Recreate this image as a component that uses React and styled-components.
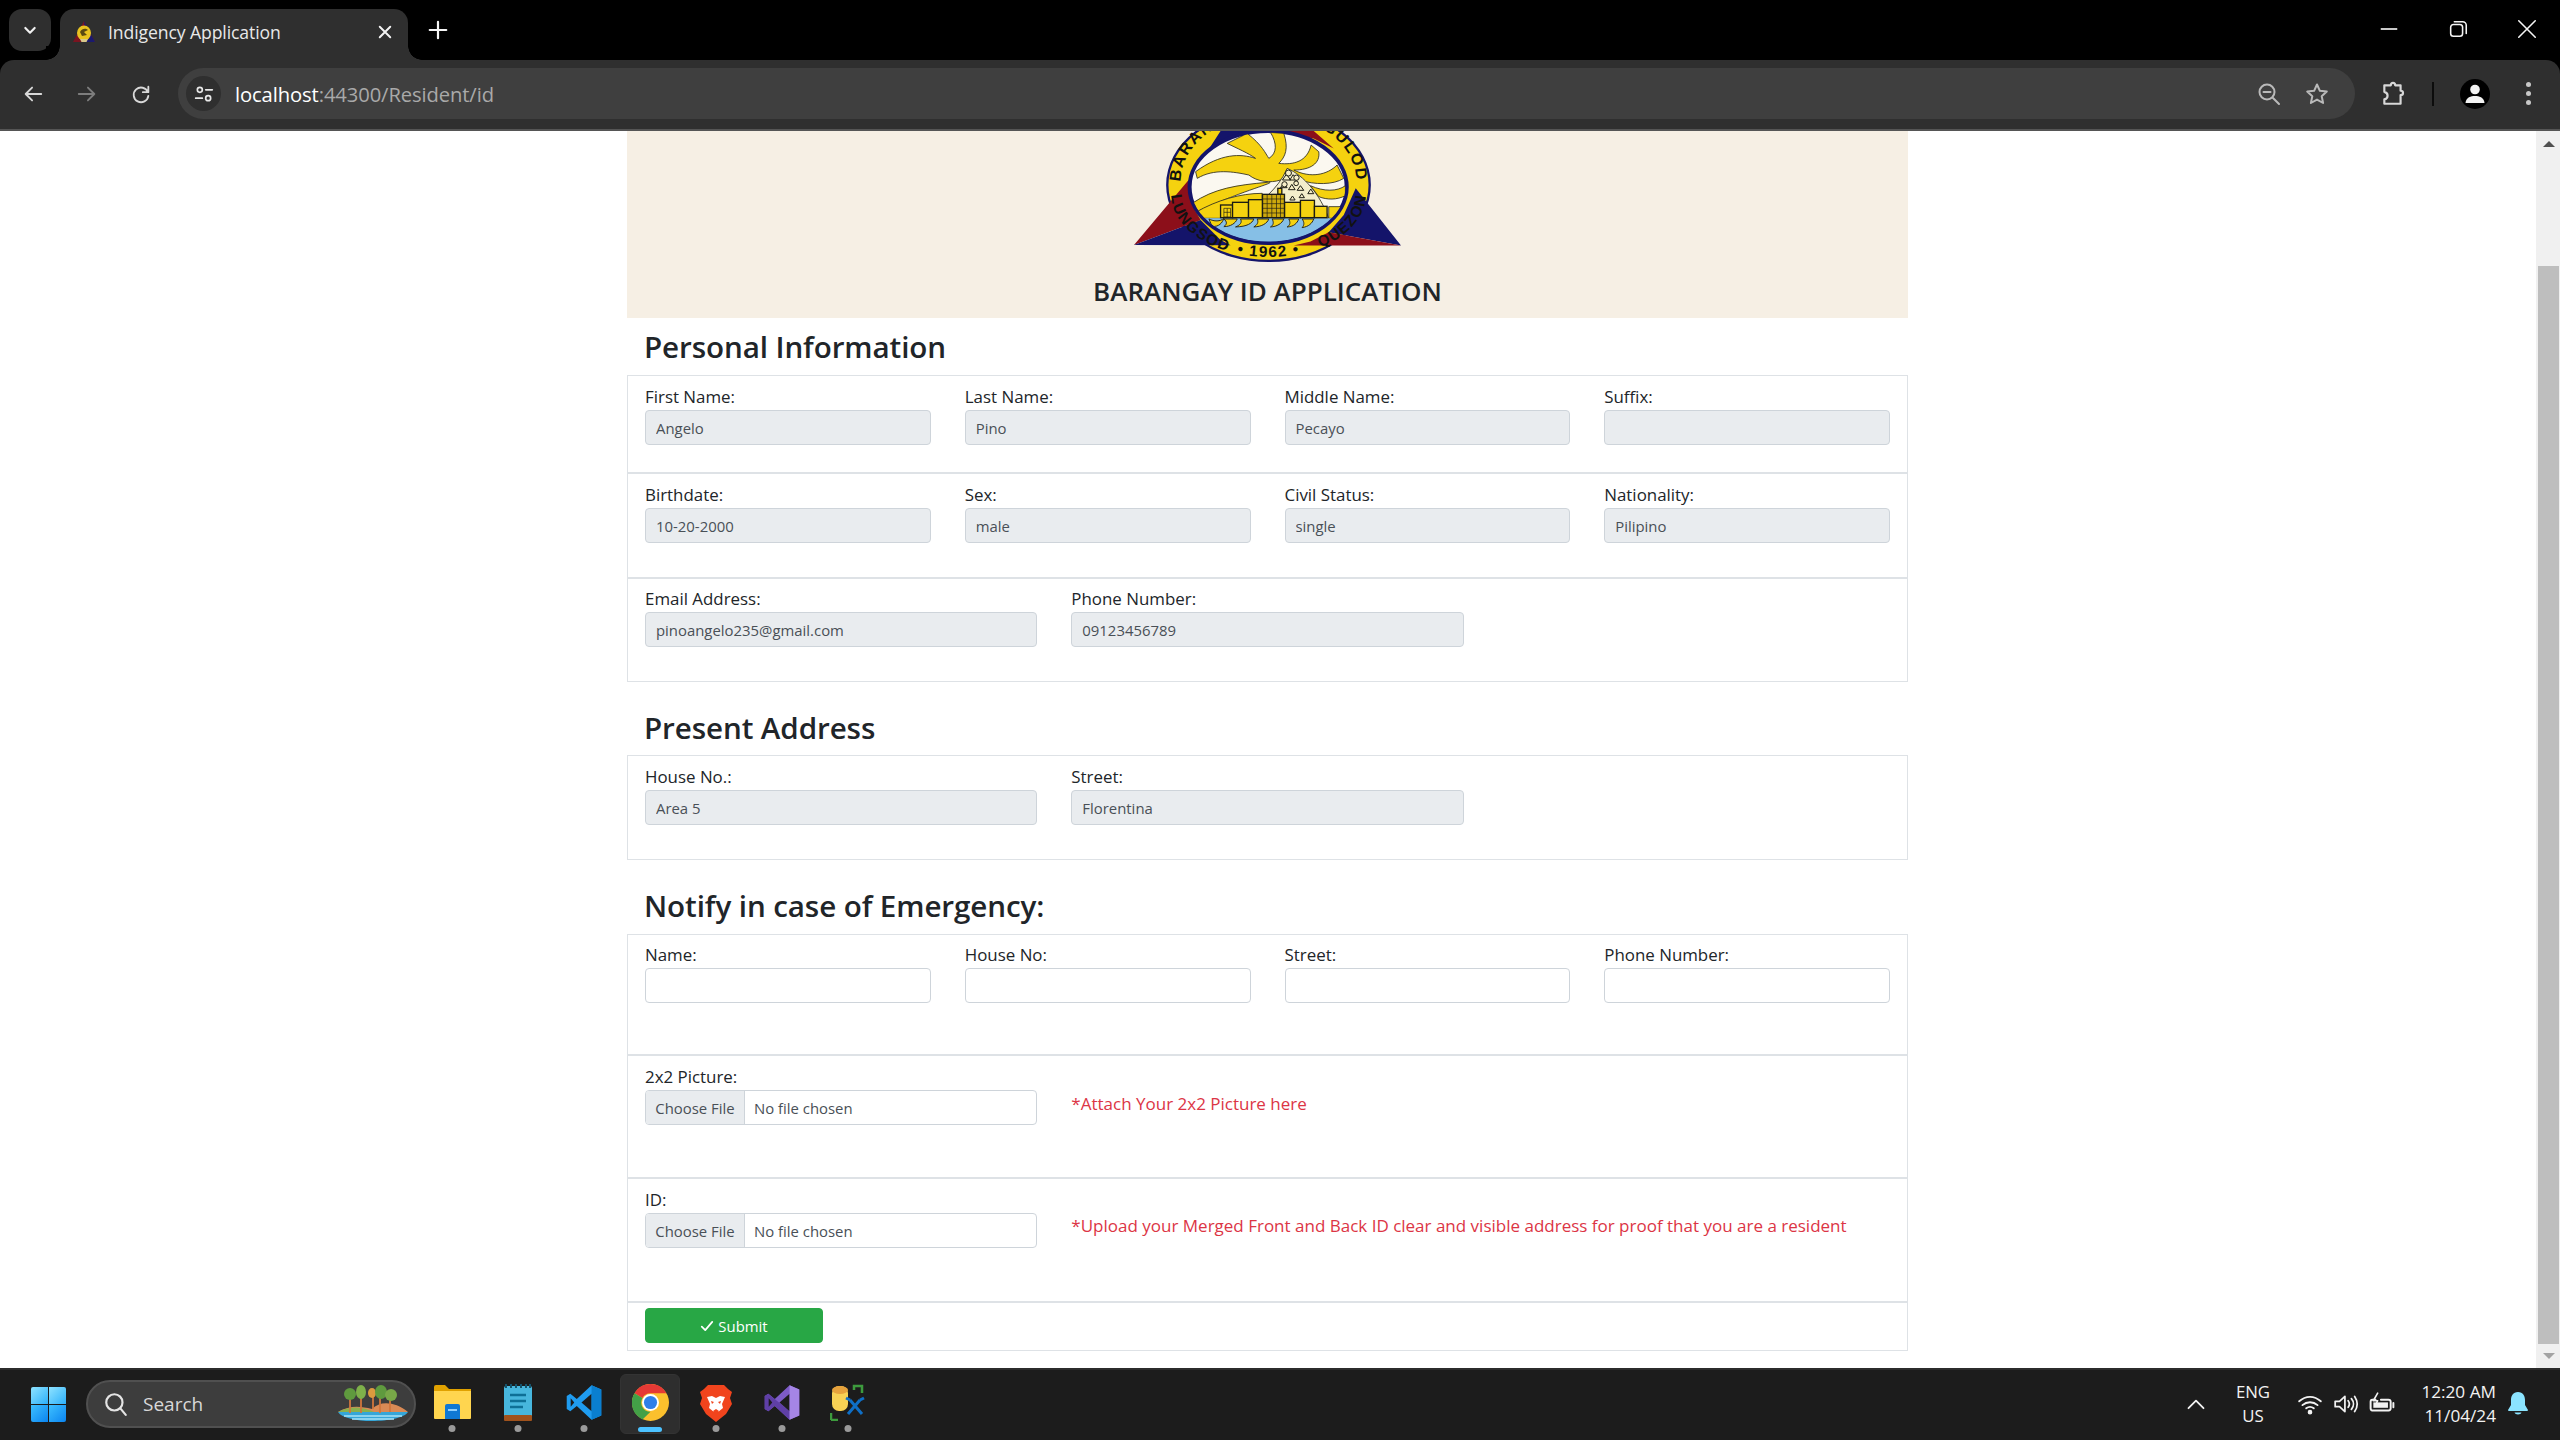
import React from "react";
import styled, { createGlobalStyle } from "styled-components";

const FONT = `"Open Sans", "Noto Sans", "Liberation Sans", sans-serif`;
const LOGO_FONT = `'Liberation Sans', sans-serif`;

const Global = createGlobalStyle`
  html, body { margin: 0; padding: 0; width: 2560px; height: 1440px; overflow: hidden; background: #fff; }
  * { box-sizing: border-box; }
  body { font-family: ${FONT}; color: #212529; }
`;

const Shell = styled.div`
  width: 2560px; height: 1440px; display: flex; flex-direction: column; overflow: hidden;
`;

/* ---------- browser chrome ---------- */
const TabStrip = styled.div`
  height: 60px; background: #000; display: flex; align-items: flex-start; padding: 9px 0 0 9px; flex: none;
`;
const TabMenu = styled.div`
  width: 42px; height: 42px; border-radius: 13px; background: #2f2f2f;
  display: flex; align-items: center; justify-content: center; flex: none;
`;
const Tab = styled.div`
  position: relative; width: 348px; height: 51px; margin-left: 9px; background: #2f2f2f;
  border-radius: 14px 14px 0 0; display: flex; align-items: center; padding: 0 14px 6px 13px; flex: none;
  &::before, &::after {
    content: ""; position: absolute; bottom: 0; width: 14px; height: 14px;
  }
  &::before { left: -14px; background: radial-gradient(circle at 0 0, #000 13.5px, #2f2f2f 14px); }
  &::after { right: -14px; background: radial-gradient(circle at 100% 0, #000 13.5px, #2f2f2f 14px); }
`;
const TabTitle = styled.span`
  margin-left: 13px; font-size: 17.6px; color: #e8e8e8; flex: 1; white-space: nowrap; letter-spacing: -0.1px;
`;
const NewTab = styled.div`
  margin: 7px 0 0 19px; width: 22px; height: 28px; display: flex; align-items: center; justify-content: center;
`;
const WindowControls = styled.div`
  margin-left: auto; margin-top: 9px; display: flex; align-items: center; gap: 47px; padding-right: 22px;
`;
const Toolbar = styled.div`
  height: 71px; flex: none; background: #000; 
`;
const ToolbarInner = styled.div`
  height: 71px; background: #2f2f2f; border-radius: 14px 14px 0 0; border-bottom: 2px solid #555;
  display: flex; align-items: center; padding: 0 0 2px 22px;
`;
const NavIcon = styled.div`
  width: 22px; height: 22px; margin-right: 32px; display: flex; align-items: center; justify-content: center; flex: none;
`;
const Omnibox = styled.div`
  width: 2177px; height: 51px; margin-left: -6px; border-radius: 26px; background: #3f3f3f;
  display: flex; align-items: center; padding: 0 26px 0 8px; flex: none;
`;
const SiteInfo = styled.div`
  width: 35px; height: 35px; border-radius: 50%; background: #2f2f2f;
  display: flex; align-items: center; justify-content: center; flex: none;
`;
const Url = styled.div`
  margin-left: 14px; font-size: 20.2px; color: #fff; flex: 1; letter-spacing: -0.1px;
`;
const UrlMuted = styled.span`
  color: #a9a9a9;
`;
const OmniIcons = styled.div`
  display: flex; align-items: center; gap: 24px;
`;
const ToolIcons = styled.div`
  display: flex; align-items: center; margin-left: 25px;
`;
const Divider = styled.div`
  width: 2px; height: 24px; background: #0c0c0c; margin: 0 26px 0 26px;
`;
const Avatar = styled.div`
  width: 30px; height: 30px; border-radius: 50%; background: #000; display: flex; align-items: center; justify-content: center;
`;
const Kebab = styled.div`
  margin-left: 36px; width: 5px; display: flex; flex-direction: column; gap: 4px;
  span { width: 5px; height: 5px; border-radius: 50%; background: #c8c8c8; display: block; }
`;

/* ---------- viewport ---------- */
const Viewport = styled.div`
  flex: 1; display: flex; min-height: 0; background: #fff;
`;
const Page = styled.main`
  flex: 1; min-width: 0;
`;
const Container = styled.div`
  width: 1281px; margin: 0 0 0 627px;
`;
const Banner = styled.header`
  height: 187px; background: #f6efe4; display: flex; flex-direction: column; align-items: center;
`;
const BannerTitle = styled.h4`
  margin: 8px 0 0; font-size: 26px; line-height: 36px; font-weight: 600; color: #212529; white-space: nowrap;
`;
const SectionTitle = styled.h3`
  margin: ${(p) => p.$top}px 0 ${(p) => p.$bottom}px; padding-left: 17px; font-size: 29.6px; line-height: 38px;
  font-weight: 600; color: #212529; white-space: nowrap; letter-spacing: -0.1px;
`;
const Card = styled.section`
  border: 1px solid #dee2e6;
`;
const Row = styled.div`
  display: grid; grid-template-columns: repeat(${(p) => p.$cols}, ${(p) => 100 / p.$cols}%);
  padding-top: ${(p) => p.$top}px; padding-bottom: ${(p) => p.$bottom}px;
  border-bottom: ${(p) => (p.$last ? "none" : "2px solid #dee2e6")};
`;
const Field = styled.div`
  padding: 0 17px;
  min-width: 0;
`;
const HintColumn = styled(Field)`
  grid-column: span 2;
`;
const Label = styled.label`
  display: block; height: 26px; line-height: 26px; font-size: 16.9px; color: #212529; white-space: nowrap;
`;
const Input = styled.input`
  display: block; width: 100%; height: 35px; padding: 0 10px; font-family: ${FONT}; font-size: 14.9px; color: #495057;
  background: ${(p) => (p.readOnly ? "#e9ecef" : "#fff")}; border: 1px solid #ced4da; border-radius: 4px; outline: none;
`;
const FileBox = styled.div`
  display: flex; height: 35px; border: 1px solid #ced4da; border-radius: 4px; overflow: hidden; font-size: 14.9px; color: #495057; background: #fff;
`;
const FileButton = styled.span`
  width: 99px; flex: none; background: #e9ecef; border-right: 1px solid #ced4da;
  display: flex; align-items: center; justify-content: center; white-space: nowrap;
`;
const FileName = styled.span`
  margin-left: 9px; display: flex; align-items: center; white-space: nowrap;
`;
const Hint = styled.div`
  margin-top: ${(p) => p.$top}px; font-size: 17px; line-height: 26px; color: #dc3545; white-space: nowrap;
`;
const ButtonRow = styled.div`
  padding: 5px 17px 7px;
`;
const SubmitButton = styled.button`
  display: flex; align-items: center; justify-content: center; gap: 4px; width: 178px; height: 35px;
  background: #28a745; border: 1px solid #28a745; border-radius: 4px; color: #fff; font-family: ${FONT}; font-size: 14.9px; padding: 0;
`;

const Scrollbar = styled.div`
  width: 24px; flex: none; background: #f0f0f0; display: flex; flex-direction: column; align-items: center; padding-left: 1px;
`;
const ScrollArrowUp = styled.div`
  height: 16px; display: flex; align-items: flex-end; justify-content: center; flex: none;
`;
const ScrollArrowDown = styled.div`
  flex: 1; display: flex; align-items: center; justify-content: center;
`;
const Triangle = styled.div`
  width: 0; height: 0; border-left: 6px solid transparent; border-right: 6px solid transparent;
  ${(p) => (p.$down ? "border-top: 6px solid #a3a3a3;" : "border-bottom: 6px solid #505050;")}
`;
const Thumb = styled.div`
  width: 21px; height: 1078px; margin-top: 119px; background: #bebebe; flex: none;
`;

/* ---------- taskbar ---------- */
const Taskbar = styled.footer`
  height: 72px; flex: none; background: #1c1c1c; border-top: 2px solid #2c2c2c; display: flex; align-items: center; padding-left: 31px; position: relative;
`;
const StartIcon = styled.div`
  width: 35px; height: 35px; flex: none; margin-top: -2px;
`;
const SearchPill = styled.div`
  width: 330px; height: 48px; margin-left: 20px; margin-top: -2px; border-radius: 24px; background: #3d3d3d; border: 2px solid #505050;
  display: flex; align-items: center; padding: 0 6px 0 15px; flex: none;
`;
const SearchText = styled.span`
  margin-left: 14px; font-size: 19px; color: #d8d8d8; flex: 1;
`;
const Apps = styled.div`
  display: flex; margin-left: 3px; flex: none; 
`;
const AppSlot = styled.div`
  position: relative; width: 66px; height: 60px; display: flex; align-items: center; justify-content: center; margin-top: -2px;
  ${(p) => p.$active && `&::before { content: ""; position: absolute; left: 3px; right: 3px; top: 0; bottom: 0; background: #2e2e2e; border-radius: 6px; border: 1px solid #333; }`}
  svg { position: relative; margin-top: -3px; }
`;
const AppDot = styled.span`
  position: absolute; bottom: 2px; left: 50%; transform: translateX(-50%);
  width: ${(p) => (p.$active ? 24 : 7)}px; height: ${(p) => (p.$active ? 5 : 7)}px; border-radius: 4px;
  background: ${(p) => (p.$active ? "#4cc2ff" : "#9a9a9a")};
`;
const Tray = styled.div`
  margin-left: auto; display: flex; align-items: center; color: #f2f2f2; padding-right: 30px; margin-top: -2px;
`;
const TrayIcon = styled.div`
  display: flex; align-items: center; justify-content: center; width: ${(p) => p.$w}px; margin-left: ${(p) => p.$ml}px;
`;
const Lang = styled.div`
  margin-left: 25px; width: 44px; text-align: center; font-size: 16.8px; line-height: 24px;
`;
const Clock = styled.div`
  margin-left: 7px; width: 94px; text-align: right; font-size: 17.2px; line-height: 24px; white-space: nowrap;
`;
const Bell = styled.div`
  margin-left: 10px; width: 24px; display: flex; justify-content: center;
`;

/* ---------- drawings ---------- */
const Icon = ({ size = 22, vb = "0 0 24 24", stroke = "#c7c7c7", sw = 2, children }) => (
  <svg width={size} height={size} viewBox={vb} fill="none" stroke={stroke} strokeWidth={sw} strokeLinecap="round" strokeLinejoin="round">
    {children}
  </svg>
);

const Favicon = () => (
  <svg width="22" height="22" viewBox="0 0 22 22">
    <path d="M11 0 L22 21 L0 21 Z" fill="#7a1420" />
    <path d="M11 0 L22 21 L13 21 Z" fill="#1a1a6e" />
    <ellipse cx="11" cy="12" rx="7" ry="7.5" fill="#e9c320" />
    <path d="M7 11 C9 7 13 7 15 9 L11 11 L14 14 L9 15Z" fill="#5a4a12" />
    <path d="M7 18 H15 L13.5 21 H8.5Z" fill="#d8c88a" />
  </svg>
);

const Logo = () => (
  <svg width="267" height="134" viewBox="160 18 802 402">
    <defs>
      <clipPath id="inner"><ellipse cx="563" cy="186" rx="232" ry="164" /></clipPath>
      <path id="topArc" d="M 300 170 A 262 200 0 0 1 828 170" />
      <path id="botArc" d="M 272 210 A 292 186 0 0 0 856 210" />
    </defs>
    <ellipse cx="564" cy="180" rx="304" ry="228" fill="#f5d20f" stroke="#14146a" strokeWidth="7" />
    <text fontFamily={LOGO_FONT} fontWeight="700" fontSize="48" fill="#111" letterSpacing="5"><textPath href="#topArc" startOffset="0">BARANGAY</textPath></text>
    <text fontFamily={LOGO_FONT} fontWeight="700" fontSize="48" fill="#111" textAnchor="end" letterSpacing="5"><textPath href="#topArc" startOffset="100%">GULOD</textPath></text>
    <path d="M160 360 L324 165 L340 250 L360 285Z" fill="#8c0f1a" />
    <path d="M160 360 L360 285 L420 345 L450 361Z" fill="#14146a" />
    <path d="M962 362 L826 190 L790 270 L745 322Z" fill="#14146a" />
    <path d="M962 362 L745 322 L690 350 L640 362Z" fill="#8c0f1a" />
    <path d="M590 18 L700 18 L760 70 L700 40Z" fill="#8c0f1a" />
    <path d="M420 18 L590 18 L470 45 L370 95Z" fill="#14146a" />
    <text fontFamily={LOGO_FONT} fontWeight="700" fontSize="46" fill="#111" letterSpacing="4"><textPath href="#botArc" startOffset="0">LUNGSOD</textPath></text>
    <text fontFamily={LOGO_FONT} fontWeight="700" fontSize="46" fill="#111" letterSpacing="4" textAnchor="middle"><textPath href="#botArc" startOffset="50%">• 1962 •</textPath></text>
    <text fontFamily={LOGO_FONT} fontWeight="700" fontSize="46" fill="#111" letterSpacing="4" textAnchor="end"><textPath href="#botArc" startOffset="100%">QUEZON</textPath></text>
    <ellipse cx="563" cy="186" rx="236" ry="168" fill="#fbf8f0" stroke="#14146a" strokeWidth="12" />
    <g clipPath="url(#inner)" stroke="#2a2a20" strokeWidth="2.5" fill="#f5d20f">
      <path d="M525 100 C480 85 420 85 345 140 L350 160 C400 130 460 140 505 150 C530 170 570 175 600 165 L660 165 C700 180 760 180 790 160 L770 120 C740 150 690 160 640 135 C690 135 720 115 715 80 L692 60 C680 110 640 120 595 115 C615 95 625 70 610 25 L570 22 C590 55 590 85 565 100 C555 85 545 60 500 25 L440 55 C470 70 505 85 525 100Z" />
      <path d="M335 235 C400 190 470 180 560 172 C600 170 500 190 345 262 L335 262Z" />
      <path d="M345 262 C410 225 480 205 545 205 L545 280 L360 280Z" />
      <path d="M620 130 C670 150 720 210 745 280 L500 280 C540 220 590 200 620 130Z" fill="#f4eecb" />
      <path d="M690 182 C730 200 770 200 795 182 L795 212 C770 225 740 225 715 215Z" />
      <path d="M745 280 L745 245 L785 245 L770 280Z" />
      <path d="M320 280 H800 V360 H320Z" fill="#86bfe6" strokeWidth="0" />
    </g>
    <g clipPath="url(#inner)" fill="#f5d20f" stroke="#2a2a20" strokeWidth="3">
      <path d="M385 282 C400 290 420 290 430 280 C425 295 415 305 395 305Z" />
      <path d="M430 282 H470 C465 295 450 305 430 305 C440 298 440 290 430 282Z" />
      <path d="M480 282 H520 C515 295 500 305 465 306 C480 300 485 292 480 282Z" />
      <path d="M530 282 H565 C560 295 545 305 520 306 C530 300 535 292 530 282Z" />
      <path d="M575 282 H610 C605 295 590 305 570 306 C580 300 580 292 575 282Z" />
      <path d="M625 282 H655 C650 295 640 305 620 306 C630 300 630 292 625 282Z" />
      <path d="M665 282 H700 C695 295 685 305 665 308 C672 300 672 292 665 282Z" />
    </g>
    <g fill="#f5d20f" stroke="#1c1c14" strokeWidth="4">
      <rect x="420" y="240" width="36" height="38" />
      <rect x="456" y="232" width="48" height="46" />
      <rect x="504" y="224" width="42" height="54" />
      <rect x="612" y="232" width="48" height="46" />
      <rect x="660" y="226" width="42" height="52" />
      <rect x="702" y="244" width="38" height="34" />
      <rect x="592" y="190" width="12" height="18" />
      <rect x="546" y="208" width="66" height="70" fill="#cda80d" />
    </g>
    <g stroke="#1c1c14" strokeWidth="2">
      <path d="M560 208 V278 M574 208 V278 M588 208 V278 M600 208 V278 M546 222 H612 M546 236 H612 M546 250 H612 M546 264 H612" />
      <path d="M430 250 H450 V276 H430Z M440 250 V276 M430 262 H450" fill="none" />
    </g>
    <g fill="#f7efc8" stroke="#1c1c14" strokeWidth="3">
      <path d="M606 165 l12 -18 l12 18z M628 165 l10 -16 l12 16z" />
      <path d="M600 188 l10 -14 l10 14z M624 194 l10 -16 l10 16z M650 196 l10 -14 l10 14z" />
      <path d="M682 206 l9 -14 l9 14z M628 225 l8 -12 l8 12z M656 218 l8 -12 l8 12z" />
      <circle cx="624" cy="144" r="9" /><circle cx="648" cy="158" r="8" /><circle cx="612" cy="178" r="8" /><circle cx="647" cy="175" r="7" />
    </g>
  </svg>
);

const WinLogo = () => (
  <svg width="35" height="35" viewBox="0 0 35 35">
    <defs>
      <linearGradient id="winA" x1="0" y1="0" x2="1" y2="1"><stop offset="0" stopColor="#8fe3ff" /><stop offset="1" stopColor="#2cb0fb" /></linearGradient>
      <linearGradient id="winB" x1="0" y1="0" x2="1" y2="1"><stop offset="0" stopColor="#3ec0ff" /><stop offset="1" stopColor="#0a84f0" /></linearGradient>
    </defs>
    <path d="M0 2 a2 2 0 0 1 2 -2 H17 V17 H0Z" fill="url(#winA)" />
    <path d="M18 0 H33 a2 2 0 0 1 2 2 V17 H18Z" fill="url(#winA)" />
    <path d="M0 18 H17 V35 H2 a2 2 0 0 1 -2 -2Z" fill="url(#winB)" />
    <path d="M18 18 H35 V33 a2 2 0 0 1 -2 2 H18Z" fill="url(#winB)" />
  </svg>
);

const Island = () => (
  <svg width="70" height="38" viewBox="0 0 70 38">
    <path d="M0 27 C12 20 22 21 34 24 C42 16 56 16 70 27 Z" fill="#d98a55" />
    <path d="M0 27 C10 21 24 21 36 27Z" fill="#8ab04e" />
    <path d="M0 27 H70 C64 38 8 40 0 27Z" fill="#35a6d8" />
    <path d="M6 31 H64 M14 34 H56" stroke="#a6e2f5" strokeWidth="1.5" />
    <path d="M12 10 V28 M23 8 V28 M35 10 V24 M42 8 V28 M52 10 V27" stroke="#d0763c" strokeWidth="1.8" />
    <ellipse cx="12" cy="9" rx="6" ry="6" fill="#5f9a3e" />
    <ellipse cx="23" cy="7" rx="5" ry="7" fill="#7eb04a" />
    <ellipse cx="34" cy="8" rx="4" ry="5" fill="#dc9a3e" />
    <ellipse cx="43" cy="7" rx="6" ry="7" fill="#5f9a3e" />
    <ellipse cx="53" cy="10" rx="6" ry="6" fill="#78a848" />
  </svg>
);

const FolderApp = () => (
  <svg width="37" height="37" viewBox="0 0 37 37">
    <path d="M0 3 a2 2 0 0 1 2 -2 H11 L15 5 H37 V33 H0Z" fill="#e0a100" />
    <path d="M0 7 H37 V34 a1 1 0 0 1 -1 1 H1 a1 1 0 0 1 -1 -1Z" fill="#ffd54f" />
    <path d="M11 22 a2 2 0 0 1 2 -2 H24 a2 2 0 0 1 2 2 V35 H11Z" fill="#0f78d4" />
    <rect x="14" y="25" width="9" height="2" fill="#8fd0ff" />
  </svg>
);
const NotepadApp = () => (
  <svg width="30" height="37" viewBox="0 0 30 37">
    <rect x="1" y="2" width="28" height="33" rx="2" fill="#47b6dd" />
    <rect x="1" y="31" width="28" height="6" rx="1" fill="#a0521c" />
    <path d="M3 0 v4 M8 0 v4 M13 0 v4 M18 0 v4 M23 0 v4 M27 0 v4" stroke="#14536b" strokeWidth="2" />
    <path d="M7 11 H23 M7 17 H23 M7 23 H20" stroke="#0e6f96" strokeWidth="2.5" />
  </svg>
);
const VSCodeApp = () => (
  <svg width="36" height="37" viewBox="0 0 100 100">
    <path d="M71 2 L98 14 V86 L71 98 L30 60 L12 74 L2 68 V32 L12 26 L30 40Z" fill="#1f9cf0" />
    <path d="M71 26 L43 50 L71 74Z" fill="#1c1c1c" />
    <path d="M13 38 L23 50 L13 62Z" fill="#1c1c1c" />
    <path d="M71 2 L98 14 V86 L71 98Z" fill="#0a7fd0" />
  </svg>
);
const ChromeApp = () => (
  <svg width="37" height="37" viewBox="0 0 48 48">
    <circle cx="24" cy="24" r="24" fill="#fbc02d" />
    <path d="M24 0 A24 24 0 0 1 44.8 12 H24 A12 12 0 0 0 13.6 18 L3.2 12 A24 24 0 0 1 24 0Z" fill="#e53935" />
    <path d="M3.2 12 L13.6 18 A12 12 0 0 0 24 36 L13.6 46 A24 24 0 0 1 3.2 12Z" fill="#43a047" />
    <circle cx="24" cy="24" r="11" fill="#fff" />
    <circle cx="24" cy="24" r="8.5" fill="#2f7fe8" />
  </svg>
);
const BraveApp = () => (
  <svg width="34" height="38" viewBox="0 0 34 38">
    <path d="M9 1 H25 L29 5 L33 8 L31 14 L33 20 L27 30 L17 38 L7 30 L1 20 L3 14 L1 8 L5 5Z" fill="#f1441d" />
    <path d="M8 13 L13 12 L17 14 L21 12 L26 13 L23 20 L24 24 L19 28 H15 L10 24 L11 20Z" fill="#fff" />
    <path d="M14 27 L17 25 L20 27 L17 31Z M12 17 L15 18 L13 20Z M22 17 L19 18 L21 20Z" fill="#f1441d" />
  </svg>
);
const VSApp = () => (
  <svg width="36" height="37" viewBox="0 0 100 100">
    <path d="M71 2 L98 14 V86 L71 98 L30 60 L12 74 L2 68 V32 L12 26 L30 40Z" fill="#7d5bc7" />
    <path d="M2 32 L12 26 L71 74 V98 L30 60 L12 74 L2 68Z" fill="#5f3fa6" />
    <path d="M71 26 L43 50 L71 74Z" fill="#1c1c1c" />
    <path d="M71 2 L98 14 V86 L71 98Z" fill="#a585e6" />
    <path d="M13 38 L23 50 L13 62Z" fill="#1c1c1c" />
  </svg>
);
const ToolApp = () => (
  <svg width="36" height="37" viewBox="0 0 36 37">
    <rect x="2" y="2" width="16" height="25" rx="7" fill="#f7d154" />
    <ellipse cx="10" cy="6" rx="8" ry="4" fill="#e6a23c" />
    <path d="M24 6 V2 H32 V9 M1 36 H8 M1 36 V29" stroke="#3d9b3d" strokeWidth="2.5" fill="none" />
    <path d="M18 30 L30 16 M32 30 L20 16 M16 14 L20 16 M34 14 L30 16" stroke="#0f6fc6" strokeWidth="3" />
  </svg>
);

const APPS = [
  [FolderApp, false], [NotepadApp, false], [VSCodeApp, false], [ChromeApp, true], [BraveApp, false], [VSApp, false], [ToolApp, false],
];

const FileField = ({ label, hint, bottom, hintTop }) => (
  <Row $cols={3} $top={8} $bottom={bottom}>
    <Field>
      <Label>{label}</Label>
      <FileBox>
        <FileButton>Choose File</FileButton>
        <FileName>No file chosen</FileName>
      </FileBox>
    </Field>
    <HintColumn>
      <Hint $top={hintTop}>{hint}</Hint>
    </HintColumn>
  </Row>
);

const Fields = ({ items, cols, top, bottom, last }) => (
  <Row $cols={cols} $top={top} $bottom={bottom} $last={last}>
    {items.map(([label, value, ro]) => (
      <Field key={label}>
        <Label>{label}</Label>
        <Input readOnly={ro} defaultValue={value} />
      </Field>
    ))}
  </Row>
);

export default function App() {
  return (
    <Shell>
      <Global />
      <TabStrip>
        <TabMenu>
          <Icon size={16} stroke="#f0f0f0" sw={3.2}><path d="M5 9 L12 16 L19 9" /></Icon>
        </TabMenu>
        <Tab>
          <Favicon />
          <TabTitle>Indigency Application</TabTitle>
          <Icon size={18} stroke="#f2f2f2" sw={2.6}><path d="M5 5 L19 19 M19 5 L5 19" /></Icon>
        </Tab>
        <NewTab>
          <Icon size={22} stroke="#f5f5f5" sw={2.4}><path d="M12 3 V21 M3 12 H21" /></Icon>
        </NewTab>
        <WindowControls>
          <Icon size={22} stroke="#f5f5f5" sw={1.8}><path d="M3 12 H21" strokeLinecap="butt" /></Icon>
          <Icon size={22} stroke="#f5f5f5" sw={1.7}>
            <rect x="4" y="7" width="13" height="13" rx="3" />
            <path d="M8 4 H17 A4 4 0 0 1 21 8 V17" />
          </Icon>
          <Icon size={22} stroke="#f5f5f5" sw={1.7}><path d="M3 3 L21 21 M21 3 L3 21" /></Icon>
        </WindowControls>
      </TabStrip>
      <Toolbar>
        <ToolbarInner>
          <NavIcon><Icon size={24} stroke="#d8d8d8" sw={2}><path d="M21 12 H4 M11 5 L4 12 L11 19" /></Icon></NavIcon>
          <NavIcon><Icon size={24} stroke="#7d7d7d" sw={2}><path d="M3 12 H20 M13 5 L20 12 L13 19" /></Icon></NavIcon>
          <NavIcon><Icon size={24} stroke="#d8d8d8" sw={2}><path d="M19.5 10 A8 8 0 1 0 20 14 M20 4 V10 H14" /></Icon></NavIcon>
          <Omnibox>
            <SiteInfo>
              <Icon size={20} stroke="#e8e8e8" sw={2}>
                <circle cx="7" cy="7" r="3" /><path d="M14 7 H22 M2 17 H10" /><circle cx="17" cy="17" r="3" />
              </Icon>
            </SiteInfo>
            <Url>localhost<UrlMuted>:44300/Resident/id</UrlMuted></Url>
            <OmniIcons>
              <Icon size={24} stroke="#b9b9b9" sw={2}><circle cx="10" cy="10" r="7.5" /><path d="M6.5 10 H13.5 M16 16 L22 22" /></Icon>
              <Icon size={24} stroke="#b9b9b9" sw={2}><path d="M12 2.5 L14.9 8.8 L21.8 9.6 L16.7 14.2 L18.1 21 L12 17.6 L5.9 21 L7.3 14.2 L2.2 9.6 L9.1 8.8Z" /></Icon>
            </OmniIcons>
          </Omnibox>
          <ToolIcons>
            <Icon size={26} stroke="#d8d8d8" sw={2}>
              <path d="M4 4 H10 C10 1 14 1 14 4 H19 V9 C22 9 22 13 19 13 V21 H4 V17 C8 16 8 11 4 10Z" />
            </Icon>
            <Divider />
            <Avatar>
              <svg width="24" height="24" viewBox="0 0 24 24" fill="#f2f2f2"><circle cx="12" cy="7.5" r="4.8" /><path d="M2.5 21 C3 15 8 14 12 14 C16 14 21 15 21.5 21Z" /></svg>
            </Avatar>
            <Kebab><span /><span /><span /></Kebab>
          </ToolIcons>
        </ToolbarInner>
      </Toolbar>

      <Viewport>
        <Page>
          <Container>
            <Banner>
              <Logo />
              <BannerTitle>BARANGAY ID APPLICATION</BannerTitle>
            </Banner>

            <SectionTitle $top={10} $bottom={9}>Personal Information</SectionTitle>
            <Card>
              <Fields cols={4} top={8} bottom={27} items={[["First Name:", "Angelo", true], ["Last Name:", "Pino", true], ["Middle Name:", "Pecayo", true], ["Suffix:", "", true]]} />
              <Fields cols={4} top={8} bottom={34} items={[["Birthdate:", "10-20-2000", true], ["Sex:", "male", true], ["Civil Status:", "single", true], ["Nationality:", "Pilipino", true]]} />
              <Fields cols={3} top={7} bottom={34} last items={[["Email Address:", "pinoangelo235@gmail.com", true], ["Phone Number:", "09123456789", true]]} />
            </Card>

            <SectionTitle $top={27} $bottom={8}>Present Address</SectionTitle>
            <Card>
              <Fields cols={3} top={8} bottom={34} last items={[["House No.:", "Area 5", true], ["Street:", "Florentina", true]]} />
            </Card>

            <SectionTitle $top={27} $bottom={9}>Notify in case of Emergency:</SectionTitle>
            <Card>
              <Fields cols={4} top={7} bottom={51} items={[["Name:", "", false], ["House No:", "", false], ["Street:", "", false], ["Phone Number:", "", false]]} />
              <FileField label="2x2 Picture:" hint="*Attach Your 2x2 Picture here" bottom={52} hintTop={27} />
              <FileField label="ID:" hint="*Upload your Merged Front and Back ID clear and visible address for proof that you are a resident" bottom={53} hintTop={26} />
              <ButtonRow>
                <SubmitButton>
                  <Icon size={14} stroke="#fff" sw={3}><path d="M3 13 L9 19 L21 5" /></Icon>
                  Submit
                </SubmitButton>
              </ButtonRow>
            </Card>
          </Container>
        </Page>
        <Scrollbar>
          <ScrollArrowUp><Triangle /></ScrollArrowUp>
          <Thumb />
          <ScrollArrowDown><Triangle $down /></ScrollArrowDown>
        </Scrollbar>
      </Viewport>

      <Taskbar>
        <StartIcon><WinLogo /></StartIcon>
        <SearchPill>
          <Icon size={26} stroke="#e4e4e4" sw={2}><circle cx="10.5" cy="10.5" r="7.5" /><path d="M16 16 L21 22" /></Icon>
          <SearchText>Search</SearchText>
          <Island />
        </SearchPill>
        <Apps>
          {APPS.map(([App, active], i) => (
            <AppSlot key={i} $active={active}>
              <App />
              <AppDot $active={active} />
            </AppSlot>
          ))}
        </Apps>
        <Tray>
          <TrayIcon $w={20} $ml={0}><Icon size={20} stroke="#f2f2f2" sw={2.2}><path d="M3 17 L12 8 L21 17" /></Icon></TrayIcon>
          <Lang>ENG<br />US</Lang>
          <TrayIcon $w={26} $ml={22}>
            <Icon size={26} stroke="#f2f2f2" sw={1.7}>
              <path d="M2 9.5 C8 4 16 4 22 9.5 M5 13 C9 9.5 15 9.5 19 13 M8.5 16 C10.5 14.5 13.5 14.5 15.5 16" />
              <circle cx="12" cy="19.5" r="1.3" fill="#f2f2f2" />
            </Icon>
          </TrayIcon>
          <TrayIcon $w={26} $ml={10}>
            <Icon size={26} stroke="#f2f2f2" sw={1.6}>
              <path d="M2 9.5 H6 L11 5 V19 L6 14.5 H2Z M14 9 C15.5 11 15.5 13 14 15 M17 7 C19.5 10 19.5 14 17 17 M20 5 C23 9.5 23 14.5 20 19" />
            </Icon>
          </TrayIcon>
          <TrayIcon $w={26} $ml={10}>
            <Icon size={26} stroke="#f2f2f2" sw={1.8}>
              <path d="M6 8 H3 Q1.5 8 1.5 10 V16 Q1.5 18 3 18 H18 Q20 18 20 16 V10 Q20 8 18 8 H11 M22.5 11 V15" />
              <path d="M4 10.5 H17.5 V15.5 H4Z" fill="#f2f2f2" stroke="none" />
              <path d="M8 2 L4 9 H8 L6 13" strokeWidth="1.5" />
            </Icon>
          </TrayIcon>
          <Clock>12:20 AM<br />11/04/24</Clock>
          <Bell>
            <svg width="22" height="24" viewBox="0 0 22 24" fill="#8be4ff"><path d="M11 0 C16 0 18 4 18 8 V13 L21 18 Q21 19 20 19 H2 Q1 19 1 18 L4 13 V8 C4 4 6 0 11 0Z" /><path d="M7.5 20.5 H14.5 C14 23 8 23 7.5 20.5Z" /></svg>
          </Bell>
        </Tray>
      </Taskbar>
    </Shell>
  );
}
